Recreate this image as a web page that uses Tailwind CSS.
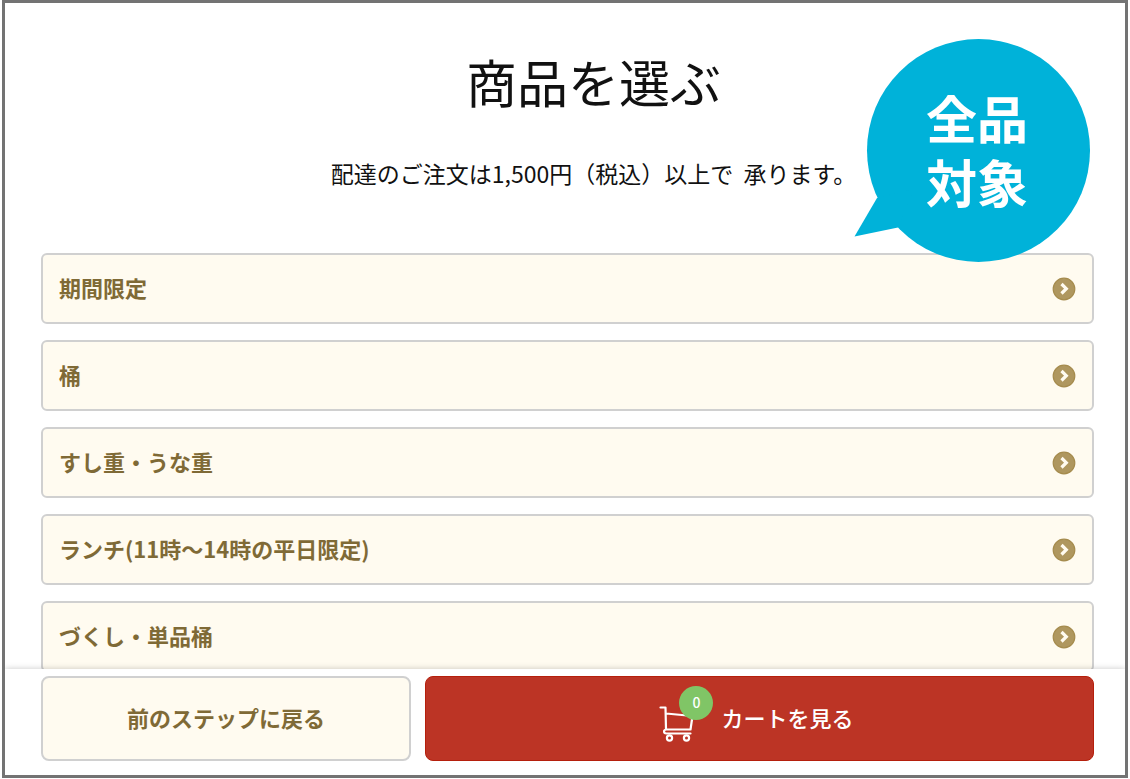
<!DOCTYPE html>
<html lang="ja">
<head>
<meta charset="utf-8">
<meta name="viewport" content="width=device-width, initial-scale=1">
<title>商品を選ぶ</title>
<script src="https://cdn.jsdelivr.net/npm/@tailwindcss/browser@4"></script>
</head>
<body class="h-screen bg-white px-0.5 pb-px font-['Noto_Sans_CJK_JP',sans-serif] text-[22px] leading-8 text-[#111111]">
<svg class="hidden" aria-hidden="true">
  <symbol id="chevron" viewBox="0 0 24 24">
    <circle cx="12" cy="12" r="10.800" fill="#af975f" stroke="#a58b4d" stroke-width="1.2"/>
    <path d="M9.500 7 14.300 11.700 9.500 16.500" fill="none" stroke="#fffbf0" stroke-width="3.200"/>
  </symbol>
</svg>
<div class="relative flex h-full flex-col overflow-hidden border-3 border-[#737373]">
  <main class="min-h-0 flex-1 overflow-hidden pr-[31px] pl-9">
    <header class="pt-[42px] pl-[52px] text-center">
      <h1 class="text-[51px] leading-[72px] font-normal">商品を選ぶ</h1>
      <p class="mt-10 text-[23px] whitespace-pre">配達のご注文は1,500円（税込）以上で  承ります。</p>
    </header>
    <nav class="mt-16 flex flex-col gap-4 font-bold text-[#7f6a36]" aria-label="商品カテゴリー">
      <a href="#limited" class="flex h-[71px] shrink-0 items-center justify-between rounded-md border-2 border-[#d0d0d0] bg-[#fffbf0] px-4"><span class="pb-1">期間限定</span><svg class="size-6" aria-hidden="true"><use href="#chevron"/></svg></a>
      <a href="#oke" class="flex h-[71px] shrink-0 items-center justify-between rounded-md border-2 border-[#d0d0d0] bg-[#fffbf0] px-4"><span class="pb-1">桶</span><svg class="size-6" aria-hidden="true"><use href="#chevron"/></svg></a>
      <a href="#juu" class="flex h-[71px] shrink-0 items-center justify-between rounded-md border-2 border-[#d0d0d0] bg-[#fffbf0] px-4"><span class="pb-1">すし重・うな重</span><svg class="size-6" aria-hidden="true"><use href="#chevron"/></svg></a>
      <a href="#lunch" class="flex h-[71px] shrink-0 items-center justify-between rounded-md border-2 border-[#d0d0d0] bg-[#fffbf0] px-4"><span class="pb-1">ランチ(11時〜14時の平日限定)</span><svg class="size-6" aria-hidden="true"><use href="#chevron"/></svg></a>
      <a href="#single" class="flex h-[71px] shrink-0 items-center justify-between rounded-md border-2 border-[#d0d0d0] bg-[#fffbf0] px-4"><span class="pb-1">づくし・単品桶</span><svg class="size-6" aria-hidden="true"><use href="#chevron"/></svg></a>
    </nav>
  </main>
  <footer class="relative grid grid-cols-[370fr_669fr] gap-3.5 bg-white pt-[7px] pr-[31px] pb-3.5 pl-9 shadow-[0_0_6px_rgba(0,0,0,0.22)]">
    <button type="button" class="h-[85px] rounded-lg border-2 border-[#d0d0d0] bg-[#fffbf0] pb-1 font-bold text-[#7f6a36]">前のステップに戻る</button>
    <button type="button" class="flex h-[85px] items-center justify-center gap-2 rounded-lg border border-[#b51f0c] bg-[#bc3425] pr-1.5 font-medium text-white">
      <span class="relative block h-[66px] w-[54px]">
        <svg class="size-full" viewBox="0 0 54 66" fill="none" stroke="#fff" stroke-width="2.200" stroke-linecap="round" stroke-linejoin="round" aria-hidden="true">
          <path d="M1.500 21.500H6.500L7 43.500M7 27.500 33.500 30 31.500 43.500H7.500C4.200 43.700 4.200 47.300 7.500 47.500H31.500"/>
          <circle cx="10.500" cy="52" r="2.600"/>
          <circle cx="27.500" cy="52" r="2.600"/>
        </svg>
        <span class="absolute top-0 right-0 flex size-[34px] items-center justify-center rounded-full bg-[#80c566] pb-0.5 text-sm leading-5">0</span>
      </span>
      <span class="pb-1">カートを見る</span>
    </button>
  </footer>
  <div class="absolute top-9 right-[35px] h-[223px] w-[236px]">
    <svg class="size-full" viewBox="0 0 236 223" fill="#00b2d9" aria-hidden="true">
      <circle cx="124.500" cy="111.500" r="111.500"/>
      <path d="M.5 197.500 23 159 60 150 44 188.500Z"/>
    </svg>
    <p class="absolute inset-0 flex items-center justify-center pb-1 pl-2.5 text-center text-[51px] leading-[64px] font-bold text-white">全品<br>対象</p>
  </div>
</div>
</body>
</html>
